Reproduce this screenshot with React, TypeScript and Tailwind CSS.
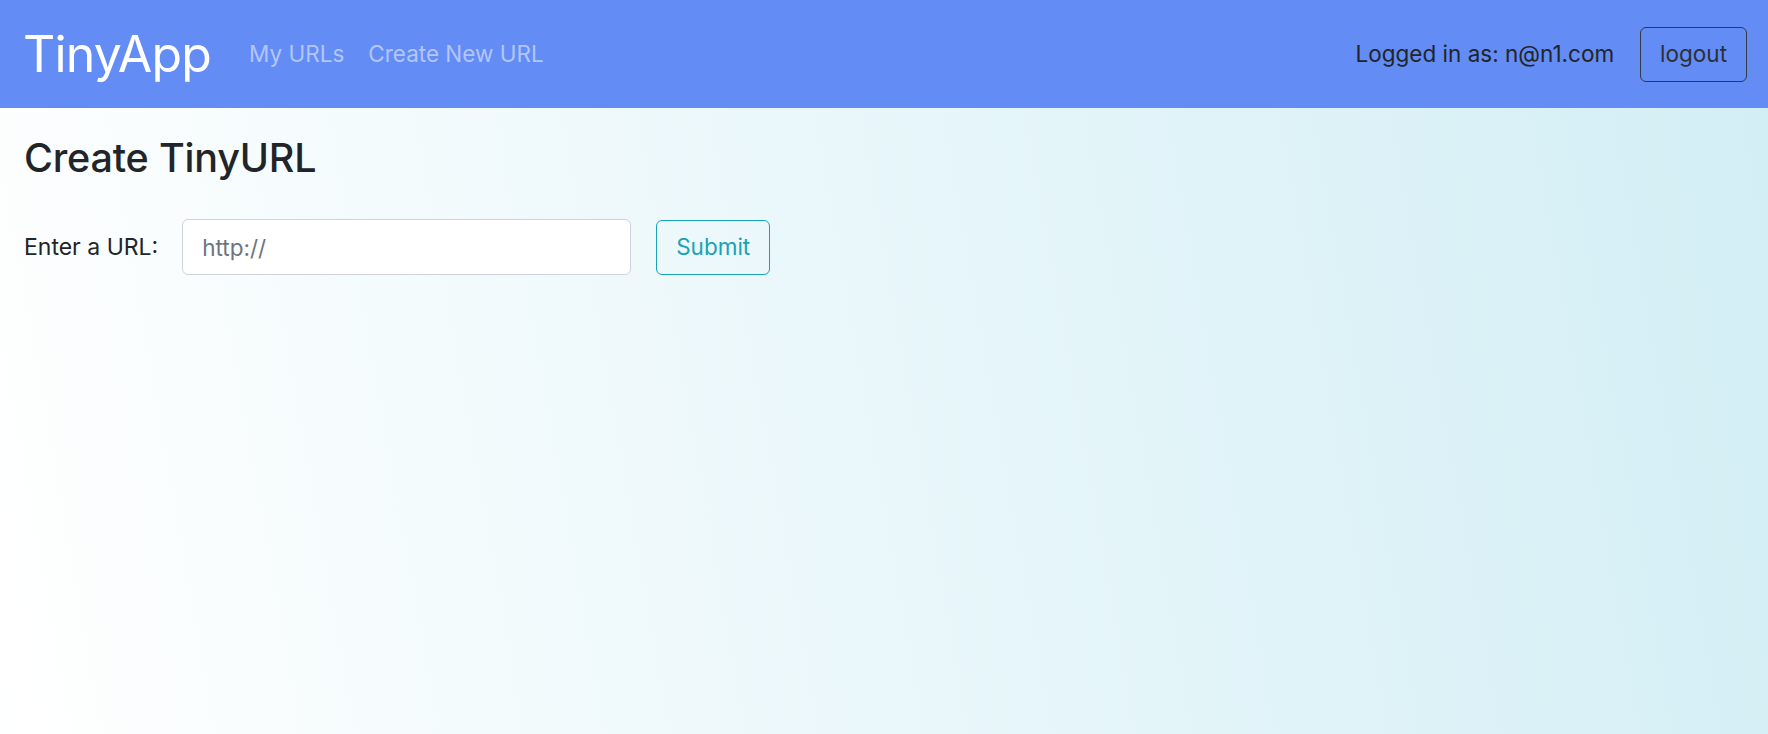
import React from 'react';

const font = { fontFamily: 'Inter, "Noto Sans", "Liberation Sans", sans-serif' };

function NavBar() {
  return (
    <nav className="flex h-[108px] items-center bg-[#648cf5] pl-[23px] pr-[21px]">
      <a href="#" className="text-[50px] leading-none text-white tracking-[-0.8px]">
        TinyApp
      </a>
      <div className="ml-[26px] flex items-center">
        <a href="#" className="px-[12px] text-[22.5px] text-[#b3c6fa]">
          My URLs
        </a>
        <a href="#" className="px-[12px] text-[22.5px] text-[#b3c6fa]">
          Create New URL
        </a>
      </div>
      <div className="ml-auto flex items-center gap-[26px]">
        <span className="text-[22.5px] text-[#212529]">Logged in as: n@n1.com</span>
        <button className="h-[55px] rounded-[6px] border border-[#343a40] px-[19px] text-[22.5px] text-[#2b3036]">
          logout
        </button>
      </div>
    </nav>
  );
}

export default function App() {
  return (
    <div
      style={font}
      className="flex min-h-[734px] flex-col bg-[linear-gradient(80deg,#ffffff_0%,#d2eef5_100%)]"
    >
      <NavBar />
      <main className="px-[24px]">
        <h2 className="mt-[26px] text-[39.5px] leading-[48px] font-medium tracking-[-0.2px] text-[#212529]">
          Create TinyURL
        </h2>
        <form className="mt-[37px] flex items-center" onSubmit={(e) => e.preventDefault()}>
          <label className="text-[23px] text-[#212529]">Enter a URL:</label>
          <input
            type="text"
            placeholder="http://"
            className="ml-[24px] h-[56px] w-[449px] rounded-[6px] border border-[#ced4da] bg-white px-[19px] text-[22.5px] text-[#495057] outline-none placeholder:text-[#6c757d]"
          />
          <button
            type="submit"
            className="ml-[25px] h-[55px] rounded-[6px] border border-[#17a2b8] px-[19px] text-[22.5px] text-[#17a2b8]"
          >
            Submit
          </button>
        </form>
      </main>
    </div>
  );
}
